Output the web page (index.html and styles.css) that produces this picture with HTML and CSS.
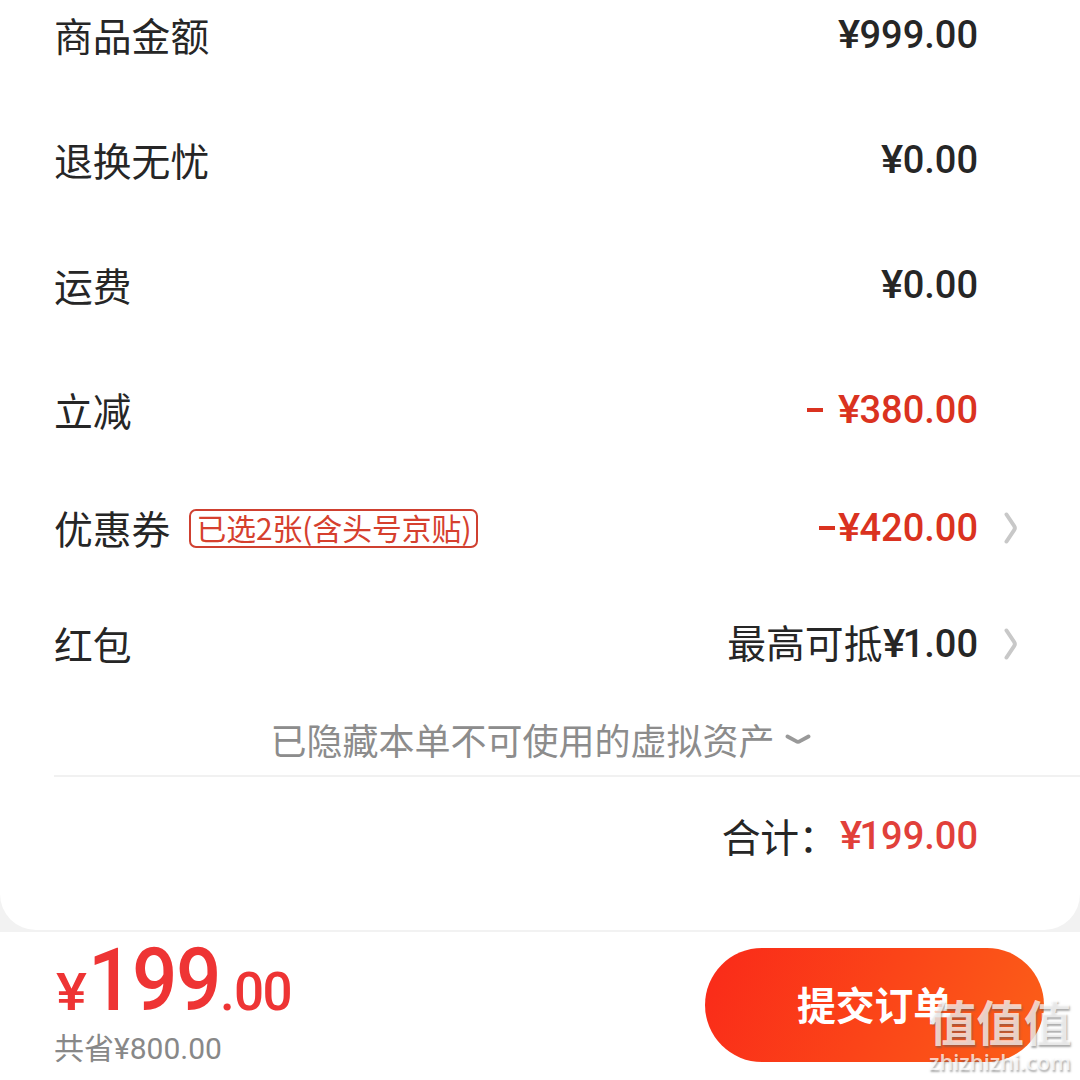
FILE: index.html
```html
<!DOCTYPE html>
<html lang="zh-CN">
<head>
<meta charset="utf-8">
<title>确认订单</title>
<link rel="stylesheet" href="styles.css">
</head>
<body>
<main class="page">
  <section class="card">
    <div class="row"><span class="label">商品金额</span><span class="amount"><span class="yen">¥</span>999<span class="dot">.</span>00</span></div>
    <div class="row"><span class="label">退换无忧</span><span class="amount"><span class="yen">¥</span>0<span class="dot">.</span>00</span></div>
    <div class="row"><span class="label">运费</span><span class="amount"><span class="yen">¥</span>0<span class="dot">.</span>00</span></div>
    <div class="row row-discount"><span class="label">立减</span><span class="amount red"><span class="minus spaced"></span><span class="yen">¥</span>380<span class="dot">.</span>00</span></div>
    <div class="row row-link">
      <span class="label">优惠券</span><span class="tag">已选2张(含头号京贴)</span>
      <span class="amount red"><span class="minus"></span><span class="yen">¥</span>420<span class="dot">.</span>00</span>
      <svg class="chevron" viewBox="0 0 14 32"><path d="M2.5 2.5 L10.2 14 Q11.5 16 10.2 18 L2.5 29.5"/></svg>
    </div>
    <div class="row row-link">
      <span class="label">红包</span>
      <span class="amount"><span class="prefix">最高可抵</span><span class="yen">¥</span><span class="one">1</span><span class="dot">.</span>00</span>
      <svg class="chevron" viewBox="0 0 14 32"><path d="M2.5 2.5 L10.2 14 Q11.5 16 10.2 18 L2.5 29.5"/></svg>
    </div>
    <div class="note"><span class="note-text">已隐藏本单不可使用的虚拟资产</span><svg class="expand" viewBox="0 0 26 12"><path d="M2.5 2.5 L11 7.2 Q13 8.4 15 7.2 L23.5 2.5"/></svg></div>
    <div class="total"><span class="label">合计：</span><span class="amount"><span class="yen">¥</span><span class="one">1</span>99<span class="dot">.</span>00</span></div>
  </section>
  <footer class="bar">
    <div class="summary">
      <div class="price"><span class="price-yen">¥</span><span class="price-int">199</span><span class="price-dot">.</span><span class="price-dec">00</span></div>
      <div class="saved">共省<span class="saved-num">¥800.00</span></div>
    </div>
    <button class="submit"><span class="submit-text">提交订单</span></button>
  </footer>
  <div class="watermark"><div class="mark">值值值</div><div class="site">zhizhizhi.com</div></div>
</main>
</body>
</html>
```
FILE: styles.css
```css
* { box-sizing: border-box; }
body {
  margin: 0;
  background: #f2f2f2;
  color: #262626;
  font-family: Roboto, "Noto Sans CJK SC", sans-serif;
}
.page { position: relative; width: 1080px; height: 1080px; overflow: hidden; }
.card {
  height: 930px;
  background: #fff;
  border-radius: 0 0 36px 36px;
}
.row {
  display: flex;
  align-items: center;
  height: 72px;
  margin-bottom: 53px;
  padding: 0 102px 0 54px;
}
.row-discount { margin-bottom: 46px; }
.row-link { margin-bottom: 44px; padding-right: 62px; }
.row-link + .row-link { margin-bottom: 24px; }
.label, .prefix {
  padding-bottom: 5px;
  font-family: "Noto Sans CJK SC", sans-serif;
  font-size: 38.8px;
  line-height: 56px;
  font-weight: 400;
}
.amount {
  display: flex;
  align-items: center;
  margin-left: auto;
  padding-bottom: 2px;
  font-size: 38px;
  line-height: 56px;
  font-weight: 500;
}
.prefix { margin-right: 2px; padding-bottom: 6px; }
.yen { transform: scaleX(1.1); }
.one { margin-left: -2px; }
.red { color: #da3220; }
.minus { width: 16px; height: 4px; margin-right: 4px; background: currentColor; }
.spaced { margin-right: 16px; }
.chevron { width: 14px; height: 32px; margin-left: 26px; margin-bottom: 2px; fill: none; stroke: #c8c8c8; stroke-width: 4; stroke-linecap: round; }
.tag {
  height: 39px;
  margin-left: 19px;
  margin-bottom: 1px;
  padding: 0 5px;
  border: 2px solid #cf4030;
  border-radius: 7px;
  color: #d6402e;
  font-family: "Noto Sans CJK SC", sans-serif;
  font-size: 29.8px;
  line-height: 32px;
}
.note {
  display: flex;
  align-items: center;
  justify-content: center;
  height: 72px;
  margin-left: 54px;
  padding-right: 53px;
  border-bottom: 2px solid #f1f1f1;
  color: #8c8c8c;
  font-family: "Noto Sans CJK SC", sans-serif;
  font-size: 36px;
}
.note-text { padding-bottom: 2px; }
.expand { width: 26px; height: 12px; margin-left: 10px; margin-bottom: 1px; fill: none; stroke: #999; stroke-width: 3.8; stroke-linecap: round; }
.total { display: flex; align-items: center; height: 120px; padding-right: 102px; justify-content: flex-end; }
.total .label { margin-right: 4px; letter-spacing: -.3px; }
.total .amount { margin-left: 0; color: #e1403a; }
.bar {
  display: flex;
  align-items: flex-start;
  justify-content: space-between;
  height: 148px;
  margin-top: 2px;
  padding: 16px 36px 0 54px;
  background: #fff;
}
.price { display: flex; align-items: baseline; height: 78px; line-height: 64px; color: #ee3434; font-weight: 500; }
.price-yen { width: 32px; margin-left: 2px; font-size: 52px; transform: scaleX(1.12); transform-origin: left; }
.price-int { width: 132px; font-size: 87px; letter-spacing: -1.6px; transform: scaleX(.92); transform-origin: left; }
.price-dot { width: 14px; font-size: 53px; }
.price-dec { font-size: 53px; letter-spacing: -1.5px; }
.saved { color: #888; font-family: "Noto Sans CJK SC", sans-serif; font-size: 30px; line-height: 40px; }
.saved-num { font-family: Roboto, sans-serif; }
.submit {
  width: 339px;
  height: 114px;
  padding: 0 0 4px 0;
  border: 0;
  border-radius: 57px;
  background: linear-gradient(115deg, #fa2c19 5%, #fb4418 50%, #fb6018 100%);
  color: #fff;
  font-family: "Noto Sans CJK SC", sans-serif;
  font-size: 38.8px;
  font-weight: 700;
}
.watermark { position: absolute; left: 929px; top: 994px; color: rgba(255, 255, 255, .74); text-shadow: 1px 2px 2px rgba(90, 90, 90, .5); white-space: nowrap; }
.mark { height: 53px; font-family: "Noto Sans CJK SC", sans-serif; font-size: 47.5px; line-height: 53px; font-weight: 700; }
.site { font-family: "Open Sans", sans-serif; font-size: 21.8px; line-height: 30px; font-weight: 600; }
```
